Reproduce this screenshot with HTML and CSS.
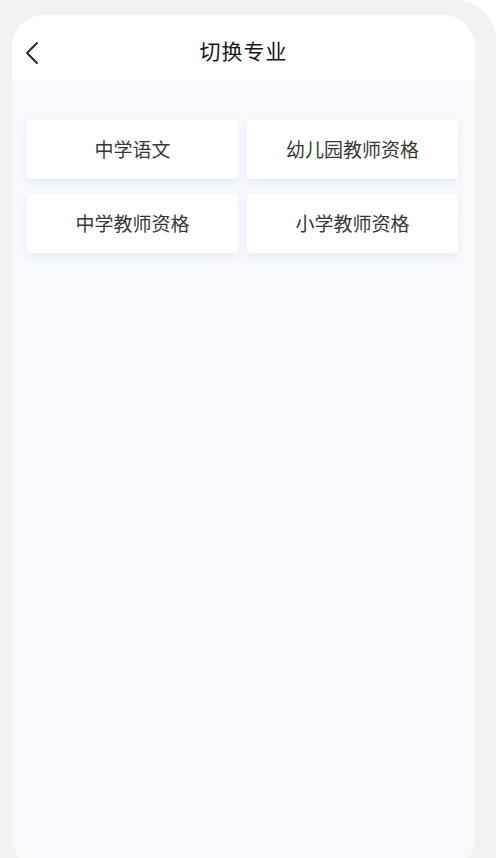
FILE: index.html
```html
<!DOCTYPE html>
<html lang="zh-CN">
<head>
    <meta charset="UTF-8" />
    <title>切换专业</title>
    <link rel="stylesheet" href="styles.css">
</head>
<body>
    <div class="frame">
        <div class="panel">
            <header class="header">
                <a class="back" href="#">
                    <svg width="14" height="24" viewBox="0 0 14 24">
                        <path d="M12 2 L2 12 L12 22" fill="none" stroke="#222" stroke-width="1.8" stroke-linecap="round" stroke-linejoin="round" />
                    </svg>
                </a>
                <h1>切换专业</h1>
            </header>

            <div class="content">
                <div class="majors">
                    <div class="major">中学语文</div>
                    <div class="major">幼儿园教师资格</div>
                    <div class="major">中学教师资格</div>
                    <div class="major">小学教师资格</div>
                </div>
            </div>
        </div>
    </div>
</body>
</html>
```

FILE: styles.css
```css
html, body {
    margin: 0;
    padding: 0;
    height: 100%;
    background-color: #ffffff;
    font-family: "Noto Sans CJK SC", "Noto Sans", sans-serif;
    overflow: hidden;
}

.frame {
    height: 100%;
    background-color: #f2f2f2;
    border-top-right-radius: 40px;
    padding: 15px 21px 0 12px;
    box-sizing: border-box;
}

.panel {
    height: 855px;
    border-radius: 32px;
    overflow: hidden;
    background-color: #f8fafd;
    display: flex;
    flex-direction: column;
}

.header {
    height: 65px;
    box-sizing: border-box;
    padding-top: 4px;
    background-color: #ffffff;
    display: flex;
    align-items: center;
    justify-content: center;
    position: relative;
}

    .header h1 {
        margin: 0;
        font-size: 21px;
        font-weight: 400;
        color: #151515;
        letter-spacing: 1px;
    }

.back {
    position: absolute;
    left: 13px;
    top: 26px;
    display: block;
    line-height: 0;
}

.content {
    flex: 1;
    padding: 40px 17px 0 15px;
}

.majors {
    display: grid;
    grid-template-columns: 1fr 1fr;
    column-gap: 9px;
    row-gap: 15px;
}

.major {
    height: 59px;
    box-sizing: border-box;
    padding-bottom: 3px;
    background-color: #ffffff;
    border-radius: 3px;
    box-shadow: 0 4px 10px rgba(205, 220, 245, 0.45);
    display: flex;
    align-items: center;
    justify-content: center;
    font-size: 19px;
    color: #383838;
}
```
